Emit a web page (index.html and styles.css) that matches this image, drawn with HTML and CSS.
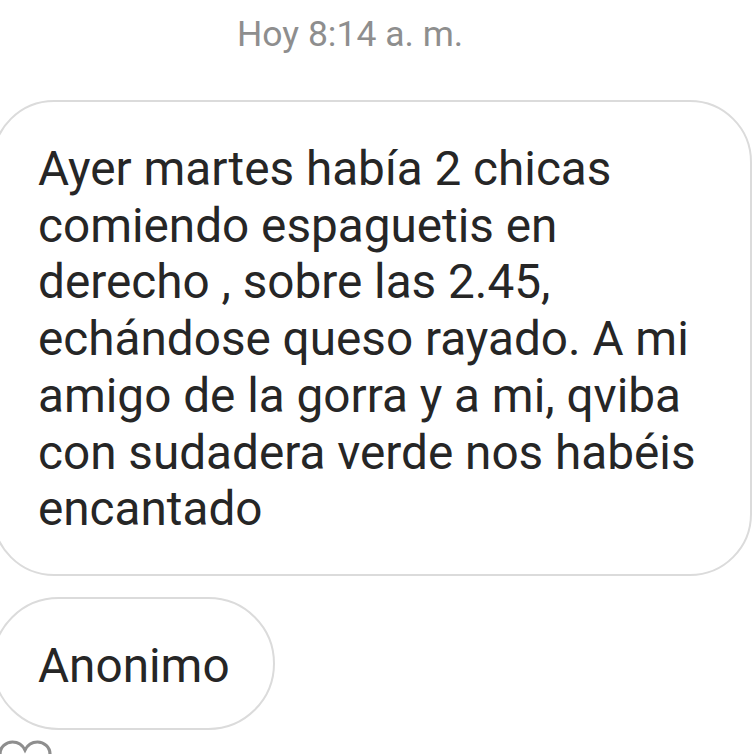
FILE: index.html
```html
<!DOCTYPE html>
<html lang="es">
<head>
<meta charset="utf-8">
<link rel="stylesheet" href="styles.css">
</head>
<body>
<div class="thread">
  <div class="time">Hoy 8:14 a. m.</div>
  <div class="bubble bubble-main">Ayer martes había 2 chicas<br>comiendo espaguetis en<br>derecho , sobre las 2.45,<br>echándose queso rayado. A mi<br>amigo de la gorra y a mi, qviba<br>con sudadera verde nos habéis<br>encantado</div>
  <div class="bubble bubble-small">Anonimo</div>
  <svg class="heart" width="54" height="46" viewBox="0 0 54 46">
    <path d="M27 44 C12 32 2 24 2 14 C2 7 8 2 14.5 2 C20 2 24.5 5 27 10 C29.5 5 34 2 39.5 2 C46 2 52 7 52 14 C52 24 42 32 27 44 Z" fill="none" stroke="#8e8e8e" stroke-width="3.2"/>
  </svg>
</div>
</body>
</html>
```
FILE: styles.css
```css
html, body {
  margin: 0;
  padding: 0;
  background: #ffffff;
  overflow: hidden;
}
.thread {
  display: flex;
  flex-direction: column;
  align-items: flex-start;
  font-family: Roboto, "Noto Sans", sans-serif;
  width: 754px;
  height: 754px;
  overflow: hidden;
}
.thread > * {
  flex-shrink: 0;
}
.time {
  margin-top: 14px;
  padding-left: 237px;
  font-size: 35.5px;
  line-height: 40px;
  color: #8e8e8e;
}
.bubble {
  box-sizing: border-box;
  margin-left: -8px;
  border: 2px solid #dbdbdb;
  color: #262626;
  font-size: 47.7px;
  line-height: 56.7px;
  white-space: nowrap;
}
.bubble-main {
  margin-top: 46px;
  width: 760px;
  height: 476px;
  border-radius: 62px;
  padding: 39px 0 0 44px;
}
.bubble-small {
  margin-top: 21px;
  width: 283px;
  height: 133px;
  border-radius: 67px;
  padding: 39px 0 0 44px;
}
.heart {
  display: block;
  margin-top: 10px;
  margin-left: -2px;
}
```
